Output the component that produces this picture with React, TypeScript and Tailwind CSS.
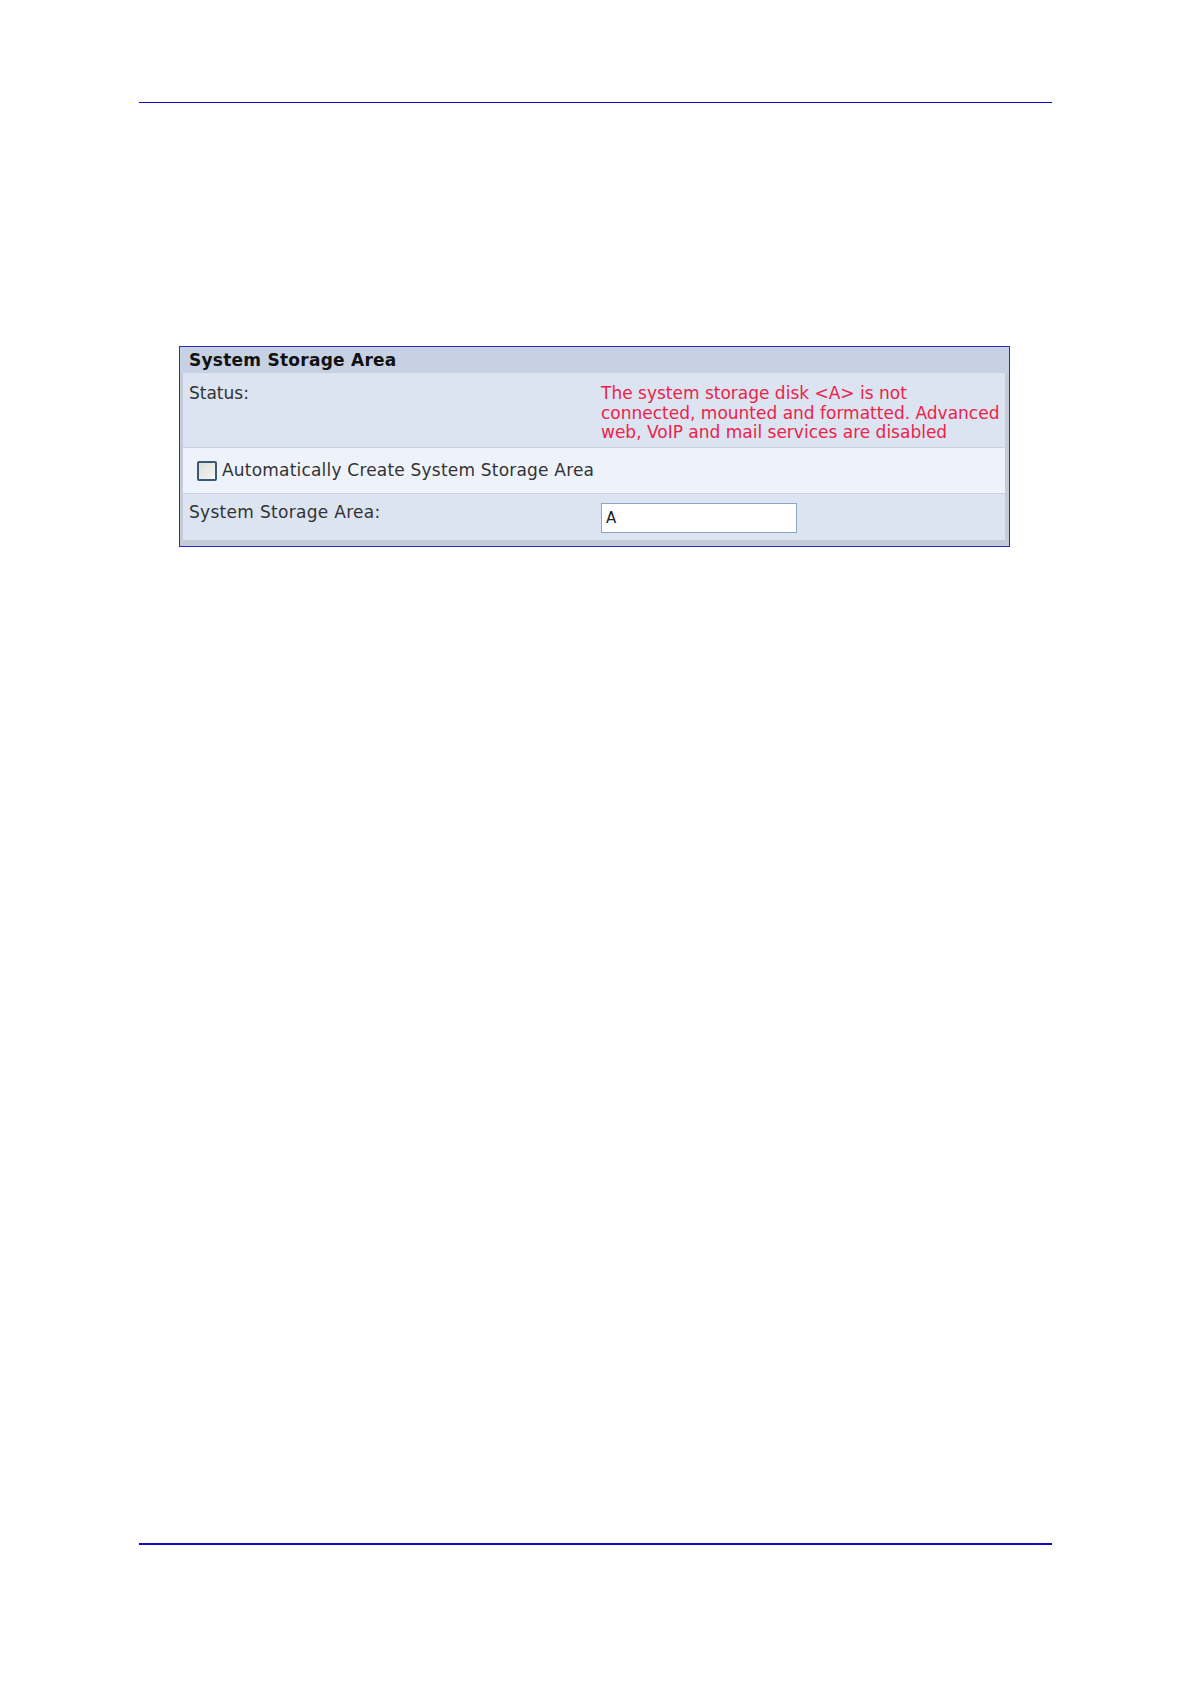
import React from "react";

export default function App() {
  const font = { fontFamily: '"DejaVu Sans", Verdana, sans-serif' };
  return (
    <div className="relative w-[1191px] h-[1683px] bg-white overflow-hidden" style={font}>
      <div className="pt-[102px] pl-[139px]">
        <div className="w-[913px] h-px bg-[#0808c8]" />
      </div>
      <div className="mt-[243px] ml-[179px] w-[831px] border border-[#2a2ad0] bg-[#c4ccd8]">
        <div className="pl-[3px] pr-[4px] pb-[6px]">
          <div className="-ml-[3px] -mr-[4px] h-[26px] bg-[#c6d2e4] pl-[9px] flex items-center">
            <span className="text-[17px] font-bold text-[#111] leading-none pt-[1px] tracking-[0.25px]">System Storage Area</span>
          </div>
          <div className="h-[74px] bg-[#dce4f2] flex text-[17px] leading-[19.5px]">
            <div className="w-[418px] pl-[6px] pt-[11px] text-[#333]">Status:</div>
            <div className="pt-[11px] text-[#ec2249] whitespace-nowrap">
              The system storage disk &lt;A&gt; is not
              <br />
              connected, mounted and formatted. Advanced
              <br />
              web, VoIP and mail services are disabled
            </div>
          </div>
          <div className="h-[46px] bg-[#eef2fa] border-t border-[#c9d1dd] flex items-center pl-[14px] text-[17px] text-[#333] tracking-[0.2px]">
            <div className="w-[20px] h-[20px] border-2 border-[#3b5877] rounded-[2px] bg-gradient-to-br from-[#dcdcd8] to-[#f6f6f4] mr-[5px]" />
            <span>Automatically Create System Storage Area</span>
          </div>
          <div className="h-[47px] bg-[#dce4f2] border-t border-[#c9d1dd] flex text-[17px] text-[#333] tracking-[0.3px]">
            <div className="w-[418px] pl-[6px] pt-[9px] leading-[19.5px]">System Storage Area:</div>
            <div className="pt-[9px]">
              <div className="w-[196px] h-[30px] bg-white border border-[#8fa6c0] flex items-center pl-[4px] text-[15px] text-[#222] tracking-normal">
                A
              </div>
            </div>
          </div>
        </div>
      </div>
      <div className="mt-[996px] ml-[139px] w-[913px] h-[2px] bg-[#0c0cc0]" />
    </div>
  );
}
